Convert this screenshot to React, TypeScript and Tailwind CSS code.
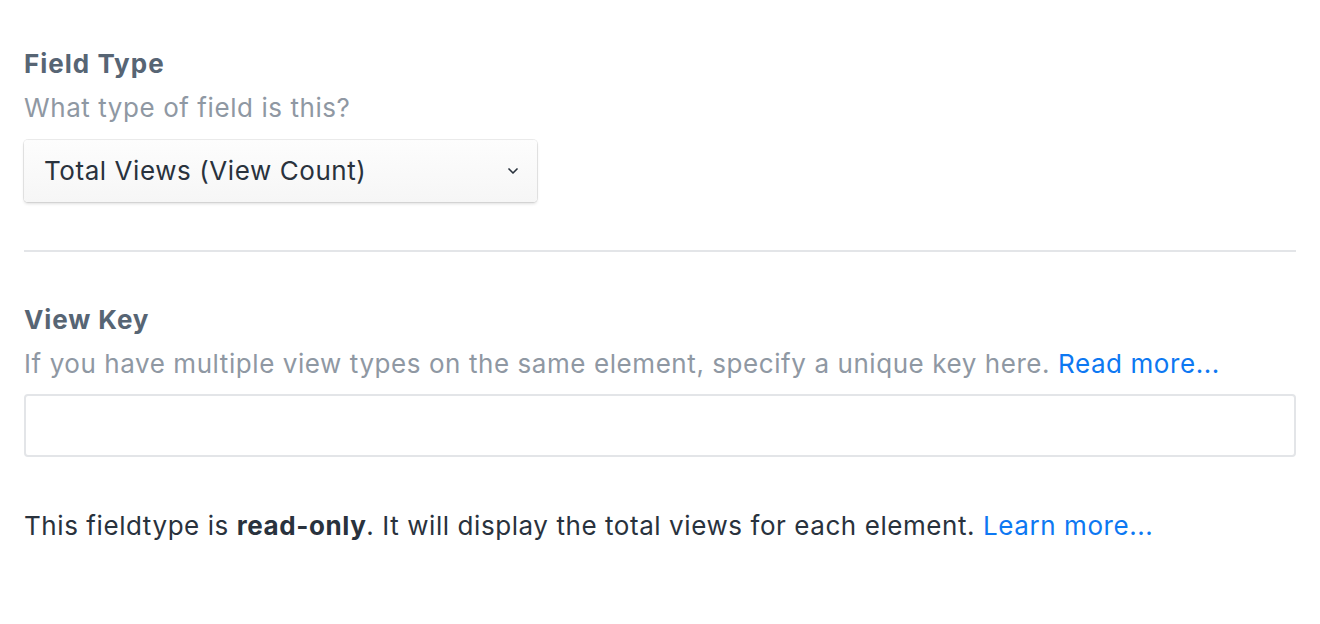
import { ChevronDown } from 'lucide-react';

const font = { fontFamily: 'Inter, Roboto, "Noto Sans", sans-serif' };

export default function App() {
  return (
    <div className="min-h-[624px] bg-white px-6 pt-[46px] text-[26px] tracking-[0.57px] text-[#29323d]" style={font}>
      {/* Field type */}
      <div>
        <div className="font-bold leading-[36px] tracking-[1px] text-[#576574]">Field Type</div>
        <div className="mt-[8px] leading-[36px] text-[#8f98a3]">What type of field is this?</div>
        <div className="mt-[14px] flex h-[62px] w-[513px] items-center justify-between rounded-[4px] bg-gradient-to-b from-[#fdfdfd] to-[#f6f6f6] pl-[20px] pr-[16px] shadow-[0_0_0_1px_rgba(0,0,0,0.08),0_2px_3px_rgba(0,0,0,0.12)]">
          <span className="leading-none">Total Views (View Count)</span>
          <ChevronDown className="h-[16px] w-[16px] text-[#29323d]" strokeWidth={2.5} />
        </div>
      </div>

      <div className="mt-[48px] h-[2px] bg-[#e3e5e8]" />

      {/* View key */}
      <div className="mt-[50px]">
        <div className="font-bold leading-[36px] tracking-[0.9px] text-[#576574]">View Key</div>
        <div className="mt-[8px] leading-[36px] text-[#8f98a3]">
          If you have multiple view types on the same element, specify a unique key here.{' '}
          <a className="text-[#0d78f2]">Read more...</a>
        </div>
        <div className="mt-[12px] h-[63px] rounded-[4px] border-2 border-[#e3e5e8] bg-white" />
      </div>

      <p className="mt-[51px] leading-[36px]">
        This fieldtype is <strong className="font-bold">read-only</strong>. It will display the total views for each element.{' '}
        <a className="text-[#0d78f2]">Learn more...</a>
      </p>
    </div>
  );
}
